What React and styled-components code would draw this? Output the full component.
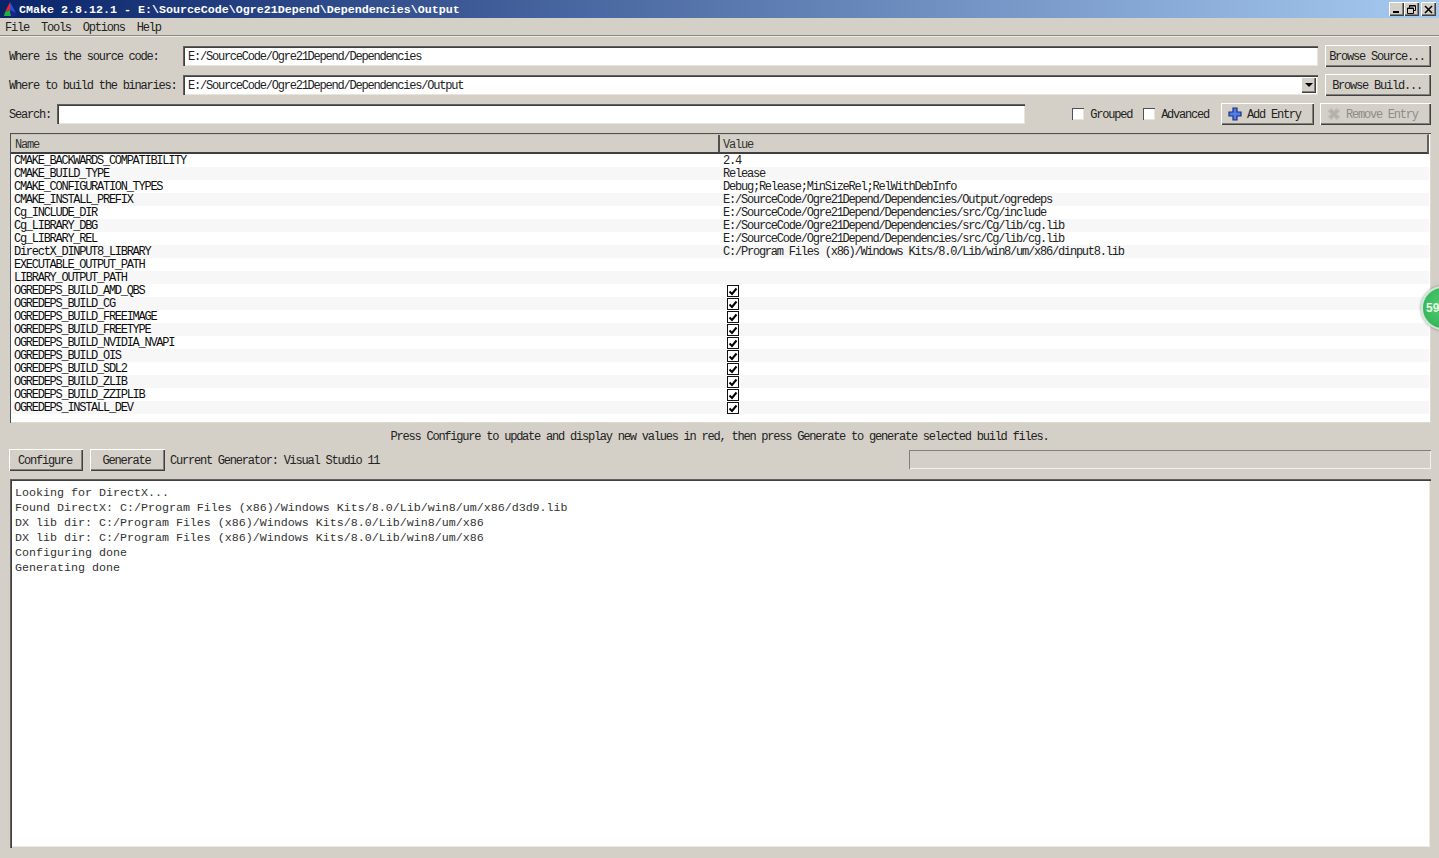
import React from 'react'
import styled, { createGlobalStyle } from 'styled-components'

const GlobalStyle = createGlobalStyle`
html, body {
  margin: 0;
  padding: 0;
  background: #d4d0c8;
}
* {
  box-sizing: border-box;
}
`

const Window = styled.div`
position: relative;
width: 1439px;
height: 858px;
overflow: hidden;
display: flex;
flex-direction: column;
background: #d4d0c8;
color: #111;
font-family: "Liberation Mono", monospace;
font-size: 12px;
letter-spacing: -1.22px;
`

const TitleBar = styled.div`
height: 18px;
display: flex;
align-items: center;
padding: 0 3px 0 2px;
background: linear-gradient(90deg, #0a246a 0%, #a6caf0 100%);
`

const TitleText = styled.span`
margin-left: 1px;
color: #fff;
font-size: 11.67px;
font-weight: 700;
letter-spacing: 0;
line-height: 18px;
padding-top: 1px;
flex: 1;
`

const WinButtons = styled.div`
display: flex;
align-items: center;
`

const WinButton = styled.div`
width: 15px;
height: 14px;
margin-left: ${(p) => p.$gap || 0}px;
background: #d4d0c8;
display: flex;
align-items: center;
justify-content: center;
box-shadow: inset 1px 1px 0 #fff, inset -1px -1px 0 #404040, inset -2px -2px 0 #808080;
`

const MenuBar = styled.div`
height: 18px;
padding: 2px 0 0 5px;
display: flex;
align-items: center;
gap: 12px;
color: #222;
border-bottom: 1px solid #8a8a84;
box-shadow: 0 1px 0 #eeeae2;
`

const Controls = styled.div`
padding: 9px 8px 0 9px;
display: flex;
flex-direction: column;
gap: 7px;
`

const Row = styled.div`
height: 22px;
display: flex;
align-items: center;
`

const Label = styled.div`
flex: 0 0 ${(p) => p.$width}px;
padding-top: 2px;
color: #222;
white-space: nowrap;
`

const Field = styled.div`
flex: ${(p) => (p.$width ? `0 0 ${p.$width}px` : '1')};
height: 20px;
margin-right: ${(p) => p.$right || 0}px;
padding: 2px 0 0 5px;
background: #fff;
display: flex;
align-items: center;
justify-content: space-between;
color: #222;
box-shadow: inset 1px 1px 0 #606060, inset 2px 2px 0 #404040, inset -1px -1px 0 #e8e4dc;
`

const ComboArrow = styled.div`
width: 15px;
height: 16px;
margin: -2px 2px 0 0;
background: #d4d0c8;
display: flex;
align-items: center;
justify-content: center;
box-shadow: inset 1px 1px 0 #fff, inset -1px -1px 0 #404040, inset -2px -2px 0 #808080;
&::after {
  content: "";
  border-left: 4px solid transparent;
  border-right: 4px solid transparent;
  border-top: 4px solid #000;
}
`

const Button = styled.div`
flex: 0 0 ${(p) => p.$width}px;
height: 22px;
margin-left: ${(p) => p.$left || 0}px;
padding: 2px 2px 0 ${(p) => p.$pad || 0}px;
display: flex;
align-items: center;
justify-content: ${(p) => (p.$pad ? 'flex-start' : 'center')};
gap: 5px;
color: ${(p) => (p.$disabled ? '#8c8c88' : '#222')};
background: #d4d0c8;
box-shadow: inset 1px 1px 0 #fff, inset -1px -1px 0 #404040, inset -2px -2px 0 #808080;
`

const CheckOption = styled.div`
display: flex;
align-items: center;
gap: 6px;
margin-left: ${(p) => p.$left || 0}px;
padding-top: 2px;
color: #222;
`

const CheckBox = styled.div`
width: 12px;
height: 12px;
margin-top: -2px;
background: #fff;
box-shadow: inset 1px 1px 0 #505050, inset -1px -1px 0 #e8e4dc;
`

const Spacer = styled.div`
flex: 1;
`

const Table = styled.div`
margin: 8px 8px 0 10px;
height: 290px;
padding: 1px 2px 0 1px;
background: #fff;
box-shadow: inset 1px 1px 0 #505050, inset -1px -1px 0 #ddd9d1;
`

const HeaderRow = styled.div`
height: 20px;
display: grid;
grid-template-columns: 709px 1fr;
background: #d4d0c8;
border-top: 1px solid #c8c4bc;
border-bottom: 2px solid #404040;
border-right: 2px solid #606060;
`

const HeaderCell = styled.div`
padding: 2px 0 0 ${(p) => (p.$divider ? 4 : 3)}px;
display: flex;
align-items: center;
color: #333;
border-right: ${(p) => (p.$divider ? '2px solid #505050' : 'none')};
`

const DataRow = styled.div`
height: 13px;
display: grid;
grid-template-columns: 708px 1fr;
align-items: start;
background: ${(p) => (p.$alt ? '#f7f7f7' : '#fff')};
white-space: nowrap;
color: #0c0c0c;
`

const NameCell = styled.div`
padding: 1px 0 0 3px;
line-height: 13px;
letter-spacing: -1.27px;
`

const ValueCell = styled.div`
padding: 1px 0 0 4px;
line-height: 13px;
color: #222;
`

const TableCheck = styled.div`
width: 12px;
height: 12px;
margin: 1px 0 0 8px;
background: #fff;
border: 1px solid #111;
display: flex;
align-items: center;
justify-content: center;
`

const Message = styled.div`
height: 26px;
padding-top: 2px;
display: flex;
align-items: center;
justify-content: center;
color: #222;
`

const ActionRow = styled.div`
height: 22px;
padding: 0 8px 0 9px;
display: flex;
align-items: center;
`

const Generator = styled.div`
margin-left: 5px;
padding-top: 2px;
color: #222;
`

const Progress = styled.div`
width: 522px;
height: 19px;
margin-left: auto;
margin-top: -1px;
box-shadow: inset 1px 1px 0 #808080, inset -1px -1px 0 #f4f2ee;
`

const Log = styled.div`
margin: 8px 8px 0 10px;
height: 369px;
padding: 7px 5px;
background: #fff;
font-size: 11.67px;
letter-spacing: 0;
line-height: 15px;
color: #333;
white-space: pre;
box-shadow: inset 1px 1px 0 #606060, inset 2px 2px 0 #404040, inset -1px -1px 0 #d4d0c8, inset -2px -2px 0 #eeeae2;
`

const Badge = styled.div`
position: absolute;
left: 1421px;
top: 286px;
width: 44px;
height: 44px;
padding-left: 3px;
border-radius: 50%;
display: flex;
align-items: center;
color: #e8ffe8;
font-family: "Liberation Sans", sans-serif;
font-size: 12px;
font-weight: 700;
letter-spacing: 0;
background: radial-gradient(circle at 50% 45%, #55cf75 0%, #36b65a 70%, #2da24e 100%);
border: 2px solid #cfe6d5;
box-shadow: 0 0 3px rgba(0, 0, 0, 0.45);
`

const rows = [
  ['CMAKE_BACKWARDS_COMPATIBILITY', '2.4'],
  ['CMAKE_BUILD_TYPE', 'Release'],
  ['CMAKE_CONFIGURATION_TYPES', 'Debug;Release;MinSizeRel;RelWithDebInfo'],
  ['CMAKE_INSTALL_PREFIX', 'E:/SourceCode/Ogre21Depend/Dependencies/Output/ogredeps'],
  ['Cg_INCLUDE_DIR', 'E:/SourceCode/Ogre21Depend/Dependencies/src/Cg/include'],
  ['Cg_LIBRARY_DBG', 'E:/SourceCode/Ogre21Depend/Dependencies/src/Cg/lib/cg.lib'],
  ['Cg_LIBRARY_REL', 'E:/SourceCode/Ogre21Depend/Dependencies/src/Cg/lib/cg.lib'],
  ['DirectX_DINPUT8_LIBRARY', 'C:/Program Files (x86)/Windows Kits/8.0/Lib/win8/um/x86/dinput8.lib'],
  ['EXECUTABLE_OUTPUT_PATH', ''],
  ['LIBRARY_OUTPUT_PATH', ''],
  ['OGREDEPS_BUILD_AMD_QBS', true],
  ['OGREDEPS_BUILD_CG', true],
  ['OGREDEPS_BUILD_FREEIMAGE', true],
  ['OGREDEPS_BUILD_FREETYPE', true],
  ['OGREDEPS_BUILD_NVIDIA_NVAPI', true],
  ['OGREDEPS_BUILD_OIS', true],
  ['OGREDEPS_BUILD_SDL2', true],
  ['OGREDEPS_BUILD_ZLIB', true],
  ['OGREDEPS_BUILD_ZZIPLIB', true],
  ['OGREDEPS_INSTALL_DEV', true],
]

const logText = `Looking for DirectX...
Found DirectX: C:/Program Files (x86)/Windows Kits/8.0/Lib/win8/um/x86/d3d9.lib
DX lib dir: C:/Program Files (x86)/Windows Kits/8.0/Lib/win8/um/x86
DX lib dir: C:/Program Files (x86)/Windows Kits/8.0/Lib/win8/um/x86
Configuring done
Generating done`

const CMakeLogo = () => (
  <svg width="16" height="16" viewBox="0 0 16 16">
    <polygon points="8,1 3,11 8,9" fill="#e8262c" />
    <polygon points="8,1 14,12 8,9" fill="#2a4fe0" />
    <polygon points="2,15 3,11 8,9 9,15" fill="#1fb045" />
    <polygon points="9,15 8,9 14,12 15,15" fill="#1a2488" />
  </svg>
)

const Check = () => (
  <svg width="10" height="9" viewBox="0 0 10 9">
    <path d="M1.5 4.5 L4 7 L8.5 1.5" fill="none" stroke="#000" strokeWidth="2" />
  </svg>
)

const CrossIcon = ({ fill, stroke, rotate }) => (
  <svg width="14" height="14" viewBox="0 0 14 14" style={{ marginTop: -2 }}>
    <path
      d="M5 1 H9 V5 H13 V9 H9 V13 H5 V9 H1 V5 H5 Z"
      fill={fill}
      stroke={stroke}
      strokeWidth="1.2"
      transform={rotate ? 'rotate(45 7 7)' : undefined}
    />
  </svg>
)

const MinGlyph = () => (
  <svg width="9" height="9" viewBox="0 0 9 9"><rect x="1" y="6" width="6" height="2" fill="#000" /></svg>
)

const RestoreGlyph = () => (
  <svg width="9" height="9" viewBox="0 0 9 9">
    <path d="M2.5 2.5 V0.5 H8.5 V5.5 H6.5 M0.5 3 H6.5 V8.5 H0.5 Z M2.5 1 H8 M1 3.5 H6" fill="none" stroke="#000" />
  </svg>
)

const CloseGlyph = () => (
  <svg width="9" height="9" viewBox="0 0 9 9">
    <path d="M1 1 L8 8 M8 1 L1 8" stroke="#000" strokeWidth="1.6" />
  </svg>
)

const App = () => {
  return (
    <Window>
      <GlobalStyle />
      <TitleBar>
        <CMakeLogo />
        <TitleText>CMake 2.8.12.1 - E:\SourceCode\Ogre21Depend\Dependencies\Output</TitleText>
        <WinButtons>
          <WinButton><MinGlyph /></WinButton>
          <WinButton><RestoreGlyph /></WinButton>
          <WinButton $gap={2}><CloseGlyph /></WinButton>
        </WinButtons>
      </TitleBar>
      <MenuBar>
        <span>File</span>
        <span>Tools</span>
        <span>Options</span>
        <span>Help</span>
      </MenuBar>
      <Controls>
        <Row>
          <Label $width={174}>Where is the source code:</Label>
          <Field $right={7}>E:/SourceCode/Ogre21Depend/Dependencies</Field>
          <Button $width={106}>Browse Source...</Button>
        </Row>
        <Row>
          <Label $width={174}>Where to build the binaries:</Label>
          <Field $right={7}>
            E:/SourceCode/Ogre21Depend/Dependencies/Output
            <ComboArrow />
          </Field>
          <Button $width={106}>Browse Build...</Button>
        </Row>
        <Row>
          <Label $width={48}>Search:</Label>
          <Field $width={968} />
          <Spacer />
          <CheckOption>
            <CheckBox />
            Grouped
          </CheckOption>
          <CheckOption $left={11}>
            <CheckBox />
            Advanced
          </CheckOption>
          <Button $width={93} $left={12} $pad={7}>
            <CrossIcon fill="#4f7fe0" stroke="#1c2f86" />
            Add Entry
          </Button>
          <Button $width={111} $left={6} $pad={7} $disabled>
            <CrossIcon fill="#b4b1aa" stroke="#c4c1ba" rotate />
            Remove Entry
          </Button>
        </Row>
      </Controls>
      <Table>
        <HeaderRow>
          <HeaderCell $divider>Name</HeaderCell>
          <HeaderCell>Value</HeaderCell>
        </HeaderRow>
        {rows.map(([name, value], i) => (
          <DataRow key={name} $alt={i % 2 === 1}>
            <NameCell>{name}</NameCell>
            {value === true ? (
              <TableCheck><Check /></TableCheck>
            ) : (
              <ValueCell>{value}</ValueCell>
            )}
          </DataRow>
        ))}
      </Table>
      <Message>Press Configure to update and display new values in red, then press Generate to generate selected build files.</Message>
      <ActionRow>
        <Button $width={74}>Configure</Button>
        <Button $width={75} $left={7}>Generate</Button>
        <Generator>Current Generator: Visual Studio 11</Generator>
        <Progress />
      </ActionRow>
      <Log>{logText}</Log>
      <Badge>59</Badge>
    </Window>
  )
}

export default App
